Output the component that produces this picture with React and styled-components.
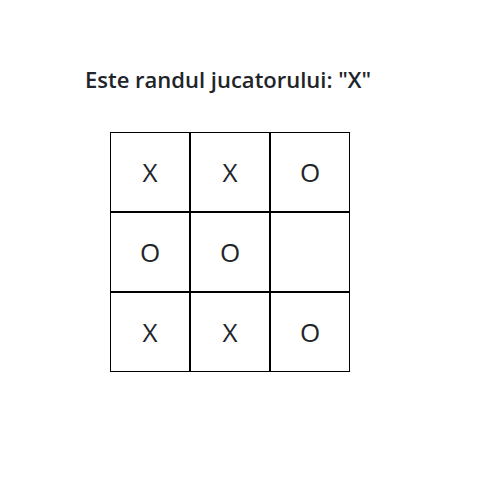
import styled, { createGlobalStyle } from 'styled-components';

const board = ['X', 'X', 'O', 'O', 'O', '', 'X', 'X', 'O'];

const App = () => {
  return (
    <>
      <GlobalStyle />
      <Page>
        <Title>Este randul jucatorului: "X"</Title>
        <Board>
          {board.map((value, i) => (
            <Cell key={i}>{value}</Cell>
          ))}
        </Board>
      </Page>
    </>
  );
};

const GlobalStyle = createGlobalStyle`
  body {
    margin: 0;
    background: #ffffff;
    font-family: "Open Sans", "Noto Sans", sans-serif;
    color: #212529;
  }
`;

const Page = styled.div`
  display: flex;
  flex-direction: column;
  padding: 63px 0 0 85px;
`;

const Title = styled.h1`
  margin: 0 0 37px 0;
  font-size: 22px;
  font-weight: 600;
  line-height: 32px;
`;

const Board = styled.div`
  display: grid;
  grid-template-columns: repeat(3, 80px);
  grid-template-rows: repeat(3, 80px);
  margin-left: 25px;
`;

const Cell = styled.div`
  box-sizing: border-box;
  display: flex;
  align-items: center;
  justify-content: center;
  border: 1px solid #000000;
  font-size: 26px;
  font-weight: 500;
`;

export default App;
